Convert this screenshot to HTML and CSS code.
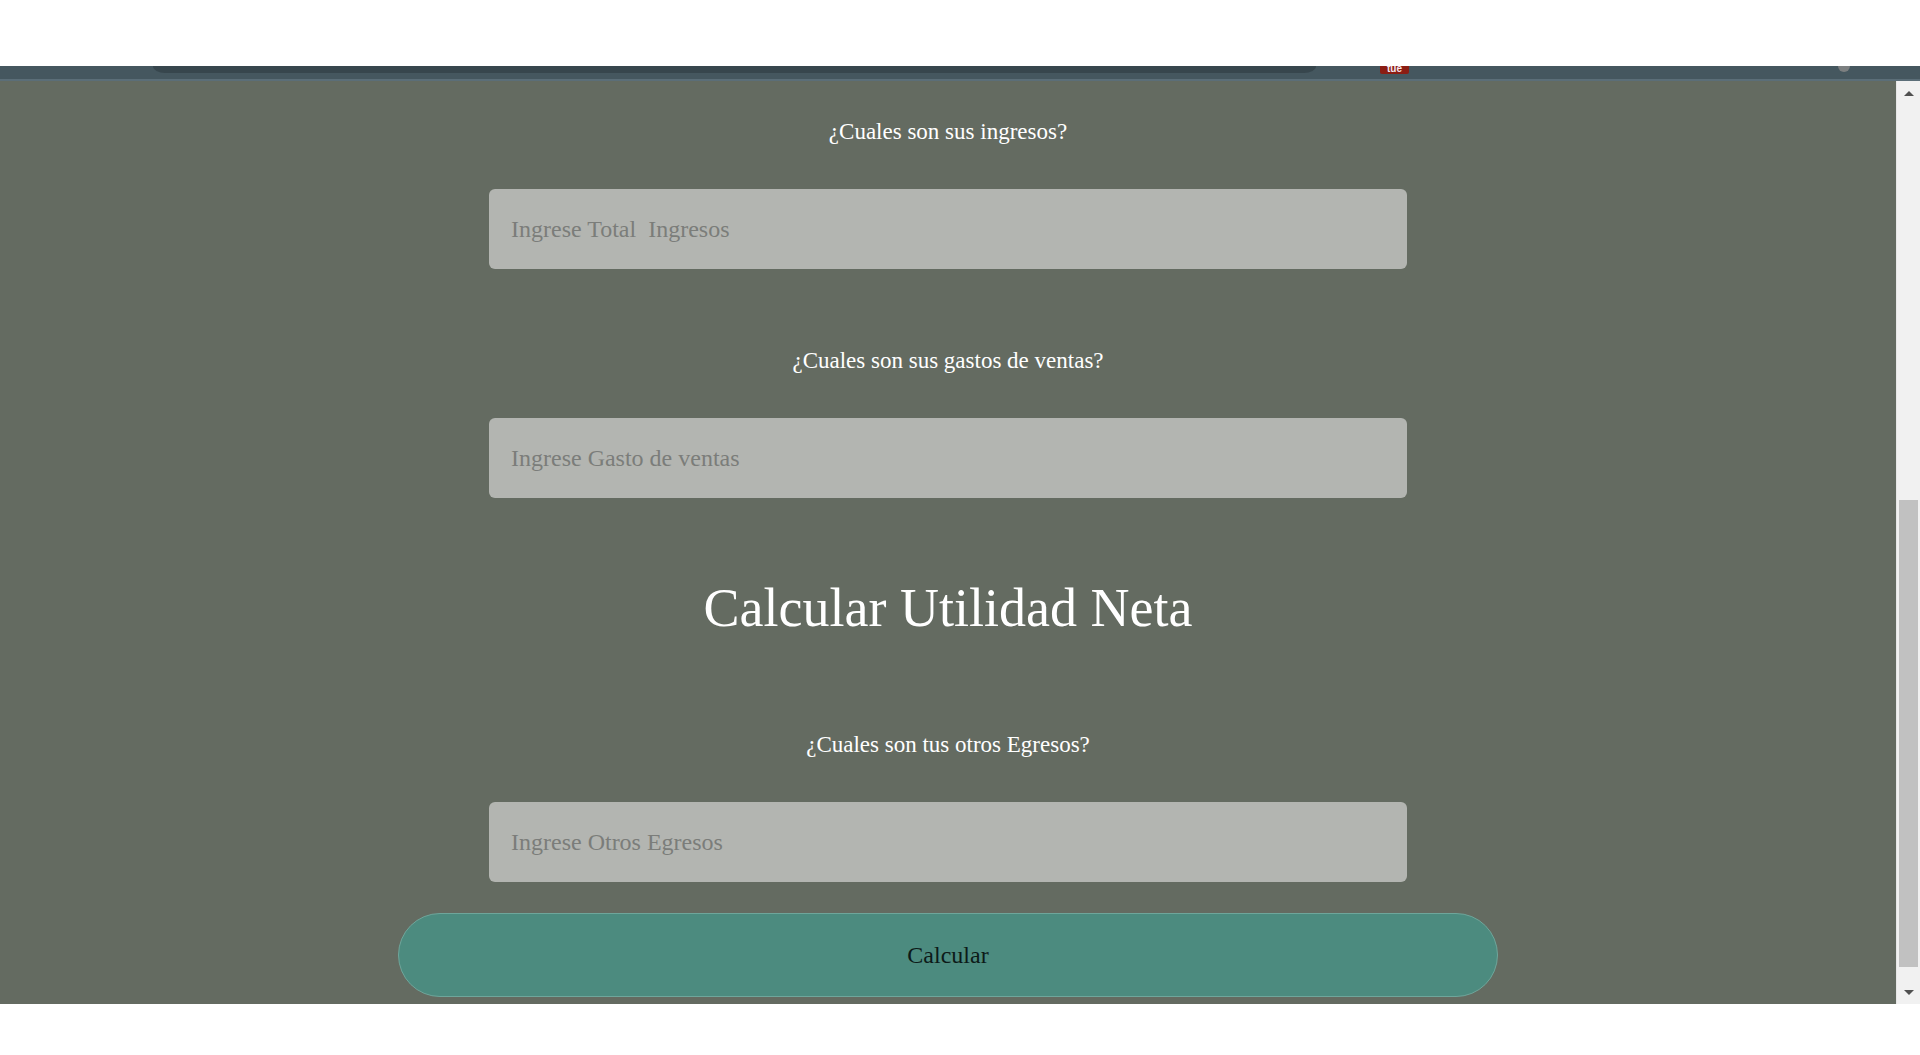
FILE: index.html
```html
<!DOCTYPE html>
<html lang="es">
<head>
<meta charset="utf-8">
<title>Calcular Utilidad Neta</title>
<link rel="stylesheet" href="styles.css">
</head>
<body>
<div class="top-white"></div>
<div class="tabbar">
  <div class="tab-shape"></div>
  <div class="badge"><span>tue</span></div>
  <div class="avatar"></div>
</div>
<div class="viewport">
  <main class="content">
    <label class="question q1" for="ingresos">¿Cuales son sus ingresos?</label>
    <input class="field" id="ingresos" type="text" placeholder="Ingrese Total  Ingresos">
    <label class="question q2" for="gastos">¿Cuales son sus gastos de ventas?</label>
    <input class="field" id="gastos" type="text" placeholder="Ingrese Gasto de ventas">
    <h1 class="title">Calcular Utilidad Neta</h1>
    <label class="question q3" for="egresos">¿Cuales son tus otros Egresos?</label>
    <input class="field" id="egresos" type="text" placeholder="Ingrese Otros Egresos">
    <button class="calc" type="button">Calcular</button>
  </main>
  <div class="scrollbar">
    <div class="arrow"><span class="tri up"></span></div>
    <div class="track"><div class="thumb"></div></div>
    <div class="arrow"><span class="tri down"></span></div>
  </div>
</div>
<div class="bottom-white"></div>
</body>
</html>
```
FILE: styles.css
```css
html, body {
  margin: 0;
  padding: 0;
  background: #ffffff;
  overflow: hidden;
}
body {
  width: 1920px;
  height: 1055px;
  font-family: "Liberation Serif", "Times New Roman", serif;
}
.top-white {
  height: 66px;
  background: #ffffff;
}
.tabbar {
  height: 13px;
  background: #45575f;
  border-bottom: 2px solid #5b6e78;
  display: flex;
  align-items: flex-start;
}
.tab-shape {
  margin-left: 153px;
  width: 1163px;
  height: 7px;
  background: #37464d;
  border-bottom-left-radius: 12px 7px;
  border-bottom-right-radius: 12px 7px;
}
.badge {
  margin-left: 64px;
  width: 29px;
  height: 8px;
  background: #8b1d13;
  border-radius: 0 0 2px 2px;
  overflow: hidden;
  display: flex;
  justify-content: center;
  align-items: flex-end;
}
.badge span {
  font-family: "Liberation Sans", Arial, sans-serif;
  font-weight: bold;
  font-size: 10px;
  line-height: 10px;
  color: #f4e6ef;
  margin-bottom: 0;
}
.avatar {
  margin-left: auto;
  margin-right: 70px;
  width: 12px;
  height: 6px;
  background: #7c7f80;
  border-radius: 0 0 6px 6px;
}
.viewport {
  height: 923px;
  display: flex;
  background: #646b61;
}
.content {
  flex: 1;
  display: flex;
  flex-direction: column;
  align-items: center;
}
.question {
  display: block;
  color: #ffffff;
  font-family: "Liberation Serif", "Times New Roman", serif;
  font-size: 23px;
  line-height: 27px;
  margin-bottom: 44px;
}
.q1 { margin-top: 37px; }
.q2 { margin-top: 78px; }
.q3 { margin-top: 92px; }
.field {
  box-sizing: border-box;
  width: 918px;
  height: 80px;
  border: none;
  border-radius: 6px;
  background: #b3b5b1;
  padding: 0 22px;
  font-family: "Liberation Serif", "Times New Roman", serif;
  font-size: 24px;
  color: #333333;
  outline: none;
  margin: 0;
}
.field::placeholder {
  color: #7b7d7a;
  opacity: 1;
}
.title {
  margin: 79px 0 0;
  font-weight: normal;
  font-size: 54px;
  line-height: 62px;
  color: #ffffff;
}
.calc {
  margin-top: 31px;
  box-sizing: border-box;
  width: 1100px;
  height: 84px;
  border: 1.5px solid #6ea69b;
  border-radius: 42px;
  background: #4c8b7f;
  font-family: "Liberation Serif", "Times New Roman", serif;
  font-size: 24px;
  color: #0c1a18;
  padding: 0;
}
.scrollbar {
  width: 24px;
  background: #f1f1f1;
  border-left: 1px solid #e6e6e6;
  box-sizing: border-box;
  display: flex;
  flex-direction: column;
}
.arrow {
  height: 24px;
  display: flex;
  justify-content: center;
  align-items: center;
}
.tri {
  width: 0;
  height: 0;
  border-left: 5px solid transparent;
  border-right: 5px solid transparent;
}
.tri.up { border-bottom: 5px solid #505050; }
.tri.down { border-top: 5px solid #505050; }
.track {
  flex: 1;
  display: flex;
  justify-content: center;
}
.thumb {
  margin-top: 395px;
  width: 19px;
  height: 467px;
  background: #c1c1c1;
}
.bottom-white {
  height: 51px;
  background: #ffffff;
}
```
